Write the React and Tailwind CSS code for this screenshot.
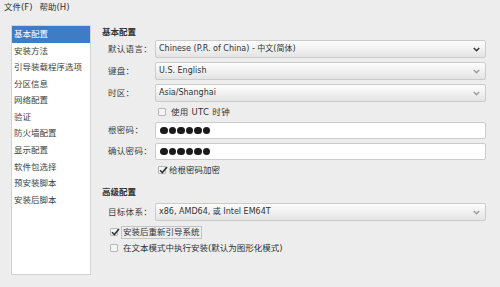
import React from 'react';

const font = { fontFamily: '"DejaVu Sans", "Noto Sans CJK SC", sans-serif' };

const navItems = [
    '基本配置',
    '安装方法',
    '引导装载程序选项',
    '分区信息',
    '网络配置',
    '验证',
    '防火墙配置',
    '显示配置',
    '软件包选择',
    '预安装脚本',
    '安装后脚本',
];

const Chevron = ({ dark }) => (
    <svg width="7" height="5" viewBox="0 0 7 5" className="shrink-0">
        <path d="M0.8 1 L3.5 3.8 L6.2 1" fill="none" stroke={dark ? '#333' : '#9a9a9a'} strokeWidth="1.4" />
    </svg>
);

const Combo = ({ value, dark }) => (
    <div className="flex h-[18px] w-[331px] items-center justify-between rounded-[2px] border border-[#cbcbcb] bg-gradient-to-b from-[#fdfdfd] to-[#e4e4e4] pl-[3px] pr-[5px] text-[8px] text-[#2e3436]">
        <span>{value}</span>
        <Chevron dark={dark} />
    </div>
);

const Password = () => (
    <div className="flex h-[17px] w-[331px] items-center gap-[1px] rounded-[2px] border border-[#cbcbcb] bg-white pl-[4px]">
        {[0, 1, 2, 3, 4, 5].map((i) => (
            <span key={i} className="h-[7.5px] w-[7.5px] rounded-full bg-[#1a1a1a]" />
        ))}
    </div>
);

const Check = ({ checked }) => (
    <span className="relative flex h-[8px] w-[8px] shrink-0 items-center justify-center rounded-[1px] border border-[#b5b5b5] bg-[#f4f4f4]">
        {checked && (
            <svg width="9" height="8" viewBox="0 0 9 8" className="absolute -top-[1px] left-0">
                <path d="M1 4.2 L3.4 6.6 L8 1" fill="none" stroke="#2e3436" strokeWidth="1.6" />
            </svg>
        )}
    </span>
);

const Row = ({ label, children }) => (
    <div className="flex items-center">
        <span className="w-[53px] pl-[6px] text-[8.5px] tracking-[0.3px] text-[#3a3f41]">{label}</span>
        {children}
    </div>
);

const App = () => {
    return (
        <div className="h-[287px] w-[500px] overflow-hidden bg-[#ededed] text-[#2e3436]" style={font}>
            <div className="flex h-[14px] items-center gap-[7px] pl-[4px] text-[8.5px]">
                <span>文件(F)</span>
                <span>帮助(H)</span>
            </div>

            <div className="mt-[11px] flex">
                <div className="ml-[11px] h-[250px] w-[80px] border border-[#d4d4d4] bg-white">
                    {navItems.map((item, idx) => (
                        <div
                            key={item}
                            className={
                                idx === 0
                                    ? 'flex h-[16.6px] items-center bg-[#3e7dc6] pl-[2px] text-[8.5px] text-white'
                                    : 'flex h-[16.6px] items-center pl-[2px] text-[8.5px] text-[#3a3f41]'
                            }
                        >
                            {item}
                        </div>
                    ))}
                </div>

                <div className="ml-[11px] flex flex-col">
                    <div className="flex h-[14px] items-center text-[8.5px] font-bold">基本配置</div>
                    <div className="mt-[1px] flex flex-col gap-[4px]">
                        <Row label="默认语言：">
                            <Combo value="Chinese (P.R. of China) - 中文(简体)" dark />
                        </Row>
                        <Row label="键盘：">
                            <Combo value="U.S. English" />
                        </Row>
                        <Row label="时区：">
                            <Combo value="Asia/Shanghai" />
                        </Row>
                    </div>
                    <div className="flex h-[20px] items-center gap-[5px] pl-[56px] text-[8.5px]">
                        <Check />
                        <span className="tracking-[0.3px]">使用 UTC 时钟</span>
                    </div>
                    <div className="flex flex-col gap-[4px]">
                        <Row label="根密码：">
                            <Password />
                        </Row>
                        <Row label="确认密码：">
                            <Password />
                        </Row>
                    </div>
                    <div className="flex h-[20px] items-center gap-[3px] pl-[56px] text-[8.5px]">
                        <Check checked />
                        <span>给根密码加密</span>
                    </div>
                    <div className="mt-[5px] flex h-[14px] items-center text-[8.5px] font-bold">高级配置</div>
                    <div className="mt-[4px]">
                        <Row label="目标体系：">
                            <Combo value="x86, AMD64, 或 Intel EM64T" />
                        </Row>
                    </div>
                    <div className="mt-[3px] flex h-[16px] items-center gap-[3px] pl-[8px] text-[8.5px]">
                        <Check checked />
                        <span className="border border-[#c4c4c4] px-[1px] leading-[11px]">安装后重新引导系统</span>
                    </div>
                    <div className="flex h-[16px] items-center gap-[5px] pl-[8px] text-[8.5px]">
                        <Check />
                        <span>在文本模式中执行安装(默认为图形化模式)</span>
                    </div>
                </div>
            </div>
        </div>
    );
};

export default App;
